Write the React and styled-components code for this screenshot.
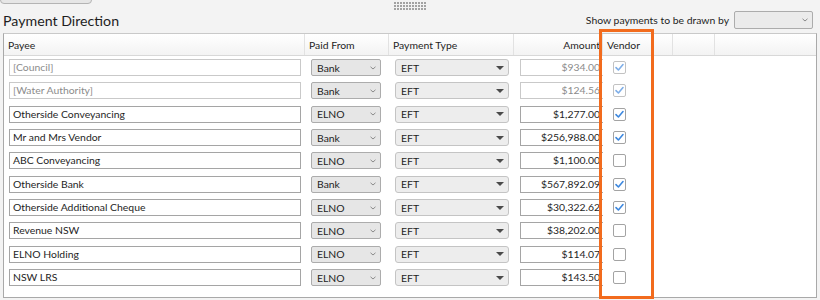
import React from "react";
import styled, { createGlobalStyle } from "styled-components";

const GlobalStyle = createGlobalStyle`
  html, body { margin: 0; padding: 0; background: #f3f3f3; }
  body { font-family: Lato, "Noto Sans", sans-serif; color: #1e1e1e; }
  * { box-sizing: border-box; }
`;

const Page = styled.div`
  width: 820px;
  height: 300px;
  background: #f3f3f3;
  position: relative;
  overflow: hidden;
`;

const TopStrip = styled.div`
  height: 10px;
  position: relative;
  display: flex;
  justify-content: center;
`;

const StubButton = styled.div`
  position: absolute;
  left: 0;
  top: -6px;
  width: 92px;
  height: 10px;
  border: 1px solid #b4b4b4;
  border-radius: 0 0 4px 4px;
  background: #e6e6e6;
`;

const Grip = styled.div`
  margin-top: 2px;
  width: 32px;
  height: 8px;
  background: repeating-linear-gradient(90deg, #a3a3a3 0 2px, transparent 2px 3px);
  -webkit-mask: repeating-linear-gradient(180deg, #000 0 2px, transparent 2px 3px);
  mask: repeating-linear-gradient(180deg, #000 0 2px, transparent 2px 3px);
`;

const HeaderBar = styled.div`
  height: 23px;
  display: flex;
  align-items: flex-end;
  justify-content: space-between;
  padding: 0 7px 0 3px;
`;

const Title = styled.h1`
  margin: 0 0 2px 0;
  font-size: 14.2px;
  font-weight: 400;
  line-height: 20px;
  color: #1e1e1e;
`;

const DrawnBy = styled.div`
  display: flex;
  align-items: center;
  gap: 5px;
  margin-bottom: 4px;
  font-size: 10.4px;
`;

const SmallSelect = styled.div`
  width: 79px;
  height: 18px;
  border: 1px solid #acacac;
  background: #ebebeb;
  border-radius: 2px;
  display: flex;
  align-items: center;
  justify-content: flex-end;
  padding-right: 4px;
`;

const Table = styled.div`
  margin: 0 3px;
  width: 814px;
  height: 265px;
  background: #fff;
  border: 1px solid #a9a9a9;
  border-top-color: #c9c9c9;
  display: flex;
  flex-direction: column;
`;

const cols = "301px 84px 125px 89px 70px 42px 1fr";

const HeadRow = styled.div`
  display: grid;
  grid-template-columns: ${cols};
  height: 22px;
  background: linear-gradient(#ffffff, #f3f3f3);
  border-bottom: 1px solid #d8d8d8;
`;

const HeadCell = styled.div`
  display: flex;
  align-items: center;
  justify-content: ${(p) => (p.$right ? "flex-end" : "flex-start")};
  padding: ${(p) => (p.$right ? "0 2px 0 0" : "0 4px")};
  font-size: 10.4px;
  color: #1e1e1e;
  border-right: ${(p) => (p.$last ? "none" : "1px solid #e2e2e2")};
  white-space: nowrap;
  overflow: hidden;
`;

const Body = styled.div`
  display: flex;
  flex-direction: column;
`;

const Row = styled.div`
  display: grid;
  grid-template-columns: ${cols};
  height: 23.33px;
  align-items: center;
`;

const Cell = styled.div`
  display: flex;
  align-items: center;
  overflow: hidden;
  padding-left: ${(p) => p.$pad || 6}px;
`;

const TextBox = styled.div`
  width: ${(p) => p.$w}px;
  flex-shrink: 0;
  height: 17px;
  border: 1px solid ${(p) => (p.$muted ? "#c9c9c9" : "#a5a5a5")};
  background: #fff;
  font-size: 10.4px;
  line-height: 15px;
  color: ${(p) => (p.$muted ? "#8c8c8c" : "#1e1e1e")};
  padding: 0 3px;
  text-align: ${(p) => (p.$right ? "right" : "left")};
  white-space: nowrap;
  overflow: hidden;
`;

const Combo = styled.div`
  width: ${(p) => p.$w}px;
  height: 17px;
  border: 1px solid ${(p) => (p.$soft ? "#c4c4c4" : "#acacac")};
  border-radius: ${(p) => (p.$soft ? 3 : 2)}px;
  background: ${(p) => (p.$soft ? "#ededed" : "#e6e6e6")};
  display: flex;
  align-items: center;
  justify-content: space-between;
  padding: 0 4px 0 5px;
  font-size: 10.4px;
  color: #1e1e1e;
`;

const Check = styled.div`
  width: 13px;
  height: 13px;
  border: 1px solid ${(p) => (p.$muted ? "#c2c2c2" : "#a3a3a3")};
  border-radius: 2px;
  background: #fff;
  display: flex;
  align-items: center;
  justify-content: center;
`;

const Highlight = styled.div`
  position: absolute;
  left: 599px;
  top: 29px;
  width: 55px;
  height: 270px;
  border: 3px solid #f26b1d;
  pointer-events: none;
`;

const Chevron = () => (
  <svg width="6" height="4" viewBox="0 0 6 4">
    <path d="M0.5 0.8 L3 3 L5.5 0.8" fill="none" stroke="#8a8a8a" strokeWidth="1" />
  </svg>
);

const Triangle = () => (
  <svg width="8" height="4" viewBox="0 0 8 4">
    <path d="M0 0 H8 L4 4 Z" fill="#4a4a4a" />
  </svg>
);

const Tick = ({ muted }) => (
  <svg width="11" height="11" viewBox="0 0 11 11">
    <path
      d="M2 5.6 L4.4 8 L9 2.6"
      fill="none"
      stroke={muted ? "#7eaee8" : "#3d88df"}
      strokeWidth="1.6"
      strokeLinecap="round"
      strokeLinejoin="round"
    />
  </svg>
);

const rows = [
  { payee: "[Council]", from: "Bank", amount: "$934.00", checked: true, muted: true },
  { payee: "[Water Authority]", from: "Bank", amount: "$124.56", checked: true, muted: true },
  { payee: "Otherside Conveyancing", from: "ELNO", amount: "$1,277.00", checked: true },
  { payee: "Mr and Mrs Vendor", from: "Bank", amount: "$256,988.00", checked: true },
  { payee: "ABC Conveyancing", from: "ELNO", amount: "$1,100.00", checked: false },
  { payee: "Otherside Bank", from: "Bank", amount: "$567,892.09", checked: true },
  { payee: "Otherside Additional Cheque", from: "ELNO", amount: "$30,322.62", checked: true },
  { payee: "Revenue NSW", from: "ELNO", amount: "$38,202.00", checked: false },
  { payee: "ELNO Holding", from: "ELNO", amount: "$114.07", checked: false },
  { payee: "NSW LRS", from: "ELNO", amount: "$143.50", checked: false },
];

export default function App() {
  return (
    <Page>
      <GlobalStyle />
      <TopStrip>
        <StubButton />
        <Grip />
      </TopStrip>
      <HeaderBar>
        <Title>Payment Direction</Title>
        <DrawnBy>
          <span>Show payments to be drawn by</span>
          <SmallSelect>
            <Chevron />
          </SmallSelect>
        </DrawnBy>
      </HeaderBar>
      <Table>
        <HeadRow>
          <HeadCell>Payee</HeadCell>
          <HeadCell>Paid From</HeadCell>
          <HeadCell>Payment Type</HeadCell>
          <HeadCell $right>Amount</HeadCell>
          <HeadCell>Vendor</HeadCell>
          <HeadCell />
          <HeadCell $last />
        </HeadRow>
        <Body>
          {rows.map((r) => (
            <Row key={r.payee}>
              <Cell $pad={5}>
                <TextBox $w={292} $muted={r.muted}>{r.payee}</TextBox>
              </Cell>
              <Cell>
                <Combo $w={70}>
                  <span>{r.from}</span>
                  <Chevron />
                </Combo>
              </Cell>
              <Cell>
                <Combo $w={114} $soft>
                  <span>EFT</span>
                  <Triangle />
                </Combo>
              </Cell>
              <Cell>
                <TextBox $w={84} $right $muted={r.muted}>{r.amount}</TextBox>
              </Cell>
              <Cell $pad={10}>
                <Check $muted={r.muted}>{r.checked && <Tick muted={r.muted} />}</Check>
              </Cell>
              <Cell />
              <Cell />
            </Row>
          ))}
        </Body>
      </Table>
      <Highlight />
    </Page>
  );
}
